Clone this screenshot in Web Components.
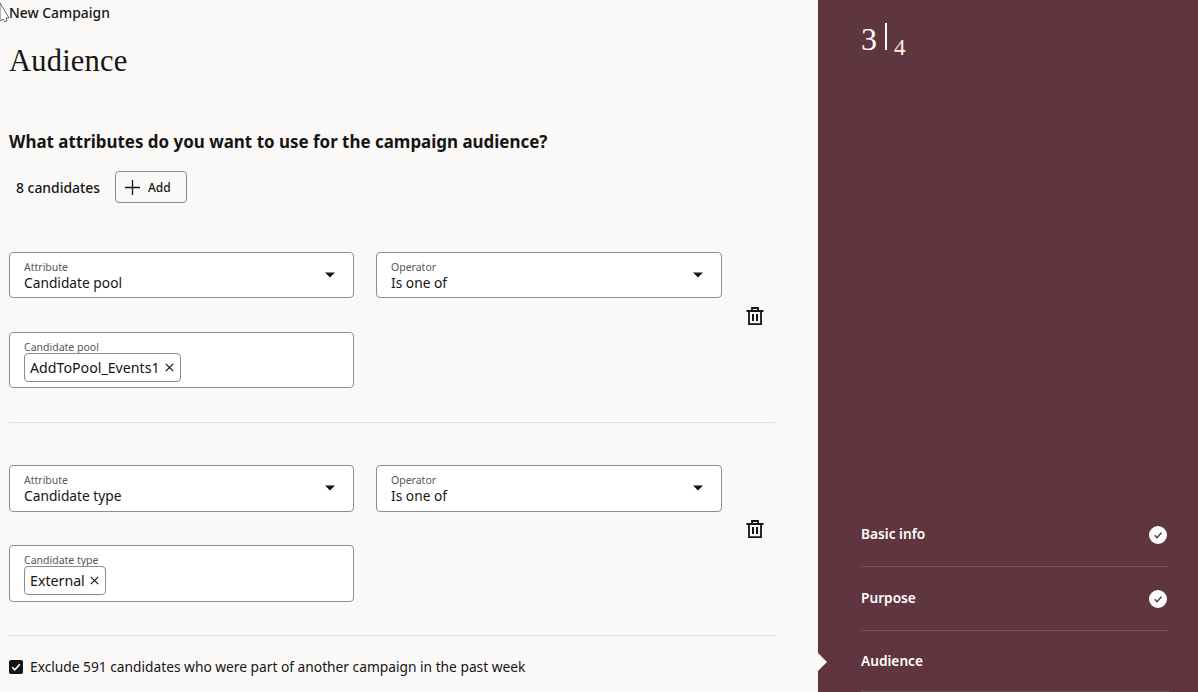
<!DOCTYPE html>
<html lang="en">
<head>
<meta charset="utf-8">
<title>New Campaign</title>
<style>
  html, body { margin: 0; height: 100%; overflow: hidden; }
  body { font-family: "Noto Sans", "Liberation Sans", sans-serif; color: #161513; background: #fbf9f8; }
</style>
</head>
<body>
<campaign-page>
  <audience-rule attribute="Candidate pool" value="AddToPool_Events1"></audience-rule>
  <audience-rule attribute="Candidate type" value="External"></audience-rule>
</campaign-page>

<script>
const checkIcon = /* html */ `
  <svg width="18" height="18" viewBox="0 0 18 18"><circle cx="9" cy="9" r="9" fill="#fff"/><path d="M5.600 9.300l2.400 2.400 4.400-5" fill="none" stroke="#5f363f" stroke-width="1.500"/></svg>
`;

class SelectField extends HTMLElement {
  connectedCallback() {
    let root = this.attachShadow({ mode: 'open' });
    root.innerHTML = /* html */ `
      <style>
        :host { display: block; height: 46.400px; box-sizing: border-box; border: 1px solid #8f8b87; border-radius: 4px; background: #fff; position: relative; }
        .label { position: absolute; left: 14px; top: 8px; font-size: 10.500px; line-height: 12px; color: #5b5652; }
        .value { position: absolute; left: 14px; top: 19.500px; font-size: 13.750px; line-height: 19px; color: #161513; }
        svg { position: absolute; right: 18px; top: 19px; }
      </style>
      <span class="label">${this.getAttribute('label')}</span>
      <span class="value">${this.getAttribute('value')}</span>
      <svg width="10" height="6" viewBox="0 0 10 6"><path d="M0 .5h10L5 5.500z" fill="#161513"/></svg>
    `;
  }
}

class ChipField extends HTMLElement {
  connectedCallback() {
    let root = this.attachShadow({ mode: 'open' });
    root.innerHTML = /* html */ `
      <style>
        :host { display: block; height: 56.300px; box-sizing: border-box; border: 1px solid #8f8b87; border-radius: 4px; background: #fff; padding: 8px 14px 0; }
        .label { display: block; height: 12px; font-size: 10.500px; line-height: 12px; color: #5b5652; }
        .chip { display: inline-flex; align-items: center; gap: 5px; height: 29px; box-sizing: border-box; padding: 0 6px 0 5px; border: 1px solid #8f8b87; border-radius: 4px; font-size: 14.200px; color: #161513; }
      </style>
      <span class="label">${this.getAttribute('label')}</span>
      <span class="chip">${this.getAttribute('value')}
        <svg width="9" height="9" viewBox="0 0 9 9"><path d="M.8.8l7.400 7.400M8.200.8L.8 8.200" stroke="#161513" stroke-width="1.200"/></svg>
      </span>
    `;
  }
}

class AudienceRule extends HTMLElement {
  connectedCallback() {
    let attribute = this.getAttribute('attribute');
    let value = this.getAttribute('value');
    let root = this.attachShadow({ mode: 'open' });
    root.innerHTML = /* html */ `
      <style>
        :host { display: block; width: 766px; border-bottom: 1px solid #e4e1dd; padding-bottom: 34px; }
        :host(:last-child) { padding-bottom: 33.400px; }
        .row { display: flex; align-items: center; }
        .fields { display: grid; grid-template-columns: 345px 346px; column-gap: 22px; row-gap: 33.600px; }
        button { all: unset; margin-left: 23px; margin-top: -8px; width: 20px; height: 20px; }
        svg { display: block; }
      </style>
      <div class="row">
        <div class="fields">
          <select-field label="Attribute" value="${attribute}"></select-field>
          <select-field label="Operator" value="Is one of"></select-field>
          <chip-field label="${attribute}" value="${value}"></chip-field>
        </div>
        <button type="button" aria-label="Delete">
          <svg width="20" height="20" viewBox="0 0 20 20" fill="none" stroke="#161513" stroke-width="1.800">
            <path d="M1.500 5h17M7 5V2h6v3M4 5v13.200h12V5"/>
            <path d="M8 8v7M12 8v7" stroke-width="2"/>
          </svg>
        </button>
      </div>
    `;
  }
}

class StepItem extends HTMLElement {
  connectedCallback() {
    let root = this.attachShadow({ mode: 'open' });
    root.innerHTML = /* html */ `
      <style>
        :host { display: flex; align-items: center; justify-content: space-between; height: 64px; box-sizing: border-box; border-bottom: 1px solid #77505a; font-size: 13.700px; font-weight: 600; color: #fff; position: relative; }
        :host([current]) { height: 61px; }
        .text { display: block; margin-top: -2px; }
        .mark { display: flex; margin-right: 2px; margin-top: 1px; }
        :host([current]) .text { margin-top: -1px; }
        :host([current]) .arrow { display: block; }
        .arrow { display: none; position: absolute; left: -43px; top: 22px; width: 0; height: 0; border-left: 9px solid #fbf9f8; border-top: 9px solid transparent; border-bottom: 9px solid transparent; }
      </style>
      <span class="arrow"></span>
      <span class="text"><slot></slot></span>
      <span class="mark">${this.hasAttribute('done') ? checkIcon : ''}</span>
    `;
  }
}

class SidePanel extends HTMLElement {
  connectedCallback() {
    let root = this.attachShadow({ mode: 'open' });
    root.innerHTML = /* html */ `
      <style>
        :host { display: flex; flex-direction: column; justify-content: space-between; width: 380px; height: 692px; box-sizing: border-box; padding: 23px 29px 0 43px; background: #5f363f; color: #fff; }
        .count { display: flex; align-items: flex-start; font-family: "Liberation Serif", serif; height: 36px; }
        .now { font-size: 32px; line-height: 32px; }
        .bar { width: 1.500px; height: 27px; margin: 0 7.500px 0 8px; background: #fff; }
        .all { font-size: 23px; line-height: 22px; margin-top: 14px; color: #fff3df; }
        .steps { display: flex; flex-direction: column; }
      </style>
      <div class="count"><span class="now">3</span><span class="bar"></span><span class="all">4</span></div>
      <div class="steps">
        <step-item done>Basic info</step-item>
        <step-item done>Purpose</step-item>
        <step-item current>Audience</step-item>
      </div>
    `;
  }
}

class CampaignPage extends HTMLElement {
  connectedCallback() {
    let root = this.attachShadow({ mode: 'open' });
    root.innerHTML = /* html */ `
      <style>
        :host { display: flex; width: 1198px; height: 692px; overflow: hidden; position: relative; }
        main { width: 818px; box-sizing: border-box; padding: 3px 0 0 9px; }
        .crumb { font-size: 13.900px; line-height: 20px; font-weight: 500; }
        h1 { margin: 19px 0 0; font: 400 30.500px/38px "Liberation Serif", serif; letter-spacing: .2px; }
        h2 { margin: 49px 0 0; font-size: 16.950px; line-height: 26px; font-weight: 700; }
        .count { display: flex; align-items: center; margin: 16px 0 49px 7px; font-size: 13.900px; font-weight: 500; height: 32px; }
        .add { all: unset; display: flex; align-items: center; gap: 7px; margin-left: 15px; width: 72px; height: 32px; box-sizing: border-box; padding-left: 8px; border: 1px solid #8f8b87; border-radius: 4px; font-size: 12px; font-weight: 500; }
        .rules { display: flex; flex-direction: column; gap: 42px; }
        .exclude { display: flex; align-items: center; gap: 7px; margin-top: 21px; font-size: 13.750px; line-height: 20px; }
        .cursor { position: absolute; left: 0; top: 0; }
      </style>
      <main>
        <div class="crumb">New Campaign</div>
        <h1>Audience</h1>
        <h2>What attributes do you want to use for the campaign audience?</h2>
        <div class="count">8 candidates
          <button class="add" type="button">
            <svg width="17" height="17" viewBox="0 0 17 17"><path d="M8.500 1v15M1 8.500h15" stroke="#161513" stroke-width="1.300"/></svg>
            Add
          </button>
        </div>
        <div class="rules"><slot></slot></div>
        <div class="exclude">
          <svg width="14" height="14" viewBox="0 0 14 14"><rect width="14" height="14" rx="2" fill="#161513"/><path d="M3.200 7.200l2.600 2.600 5-5.500" fill="none" stroke="#fff" stroke-width="1.600"/></svg>
          Exclude 591 candidates who were part of another campaign in the past week
        </div>
      </main>
      <side-panel></side-panel>
      <svg class="cursor" width="12" height="22" viewBox="0 0 12 22"><path d="M0 3l9 15h-3l1 3-2 1-2-3-3 2z" fill="#fff" stroke="#444" stroke-width=".8"/></svg>
    `;
  }
}

customElements.define('select-field', SelectField);
customElements.define('chip-field', ChipField);
customElements.define('audience-rule', AudienceRule);
customElements.define('step-item', StepItem);
customElements.define('side-panel', SidePanel);
customElements.define('campaign-page', CampaignPage);
</script>
</body>
</html>
